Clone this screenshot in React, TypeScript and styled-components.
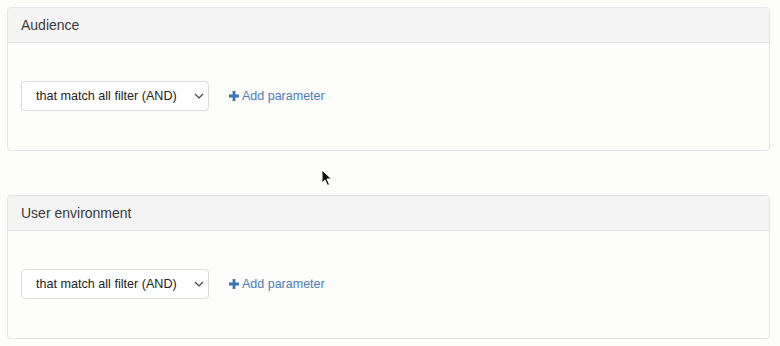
import React from "react";
import styled, { createGlobalStyle } from "styled-components";

const Global = createGlobalStyle`
  html, body { margin: 0; padding: 0; background: #fdfdfc; }
  body { font-family: "Liberation Sans", Arial, sans-serif; color: #333; }
`;

const Page = styled.div`
  position: relative;
  display: flex;
  flex-direction: column;
  gap: 44px;
  padding: 7px 10px 7px 7px;
  width: 780px;
  box-sizing: border-box;
`;

const Card = styled.section`
  border: 1px solid #e4e4ea;
  border-radius: 4px;
  background: #fdfdfc;
  overflow: hidden;
`;

const CardHeader = styled.header`
  height: 35px;
  box-sizing: border-box;
  padding: 0 13px 1px;
  display: flex;
  align-items: center;
  background: #f4f4f5;
  border-bottom: 1px solid #e4e4ea;
  font-size: 14px;
  color: #3a3a3a;
`;

const CardBody = styled.div`
  padding: 38px 13px 39px;
  display: flex;
  align-items: center;
  gap: 20px;
`;

const Select = styled.div`
  width: 188px;
  height: 30px;
  box-sizing: border-box;
  border: 1px solid #dcdcdf;
  border-radius: 4px;
  background: #fff;
  display: flex;
  align-items: center;
  justify-content: space-between;
  padding: 0 4px 0 14px;
  font-size: 12.6px;
  color: #222;
`;

const AddLink = styled.a`
  display: flex;
  align-items: center;
  gap: 3px;
  font-size: 12.5px;
  color: #4b7cb7;
  text-decoration: none;
  cursor: pointer;
`;

const Cursor = styled.svg`
  position: absolute;
  left: 321px;
  top: 169px;
`;

const Chevron = () => (
  <svg width="10" height="6" viewBox="0 0 10 6">
    <path d="M1 1l4 4 4-4" fill="none" stroke="#444" strokeWidth="1.2" />
  </svg>
);

const Plus = () => (
  <svg width="10" height="10" viewBox="0 0 10 10">
    <path d="M3.6 0h2.8v3.6H10v2.8H6.4V10H3.6V6.4H0V3.6h3.6z" fill="#3a74b4" />
  </svg>
);

const Section = ({ title }: { title: string }) => (
  <Card>
    <CardHeader>{title}</CardHeader>
    <CardBody>
      <Select>
        <span>that match all filter (AND)</span>
        <Chevron />
      </Select>
      <AddLink>
        <Plus />
        Add parameter
      </AddLink>
    </CardBody>
  </Card>
);

export default function App() {
  return (
    <>
      <Global />
      <Page>
        <Section title="Audience" />
        <Section title="User environment" />
        <Cursor width="12" height="18" viewBox="0 0 12 18">
          <path d="M1 1v13l3-3 2.5 5.5 2-1L6 10h4.5z" fill="#111" stroke="#fff" strokeWidth="1" />
        </Cursor>
      </Page>
    </>
  );
}
